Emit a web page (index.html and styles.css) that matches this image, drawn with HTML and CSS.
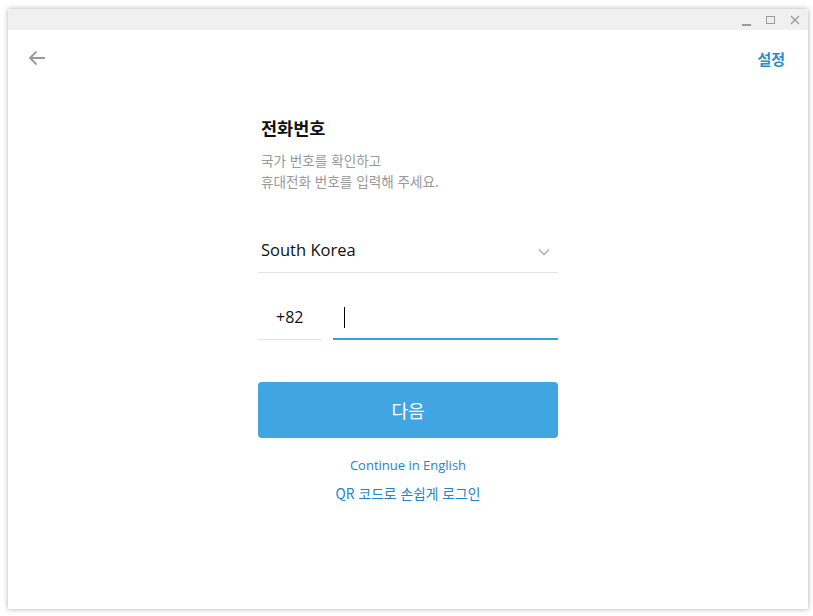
FILE: index.html
```html
<!DOCTYPE html>
<html lang="ko">
<head>
<meta charset="utf-8">
<link rel="stylesheet" href="styles.css">
</head>
<body>
<div class="window">
  <div class="titlebar">
    <span class="ctl ctl-min"></span>
    <span class="ctl ctl-max"></span>
    <svg class="ctl-close" width="10" height="10" viewBox="0 0 10 10"><path d="M1 1L9 9M9 1L1 9" stroke="#9a9a9a" stroke-width="1.3" fill="none"/></svg>
  </div>
  <div class="header">
    <svg class="back" width="18" height="16" viewBox="0 0 18 16"><path d="M17 8H2M8.5 1.5L2 8l6.5 6.5" stroke="#999" stroke-width="1.8" fill="none"/></svg>
    <span class="settings">설정</span>
  </div>
  <div class="form">
    <h1 class="title">전화번호</h1>
    <p class="desc">국가 번호를 확인하고<br>휴대전화 번호를 입력해 주세요.</p>
    <div class="country">
      <span>South Korea</span>
      <svg width="12" height="8" viewBox="0 0 12 8"><path d="M1 1.5l5 5 5-5" stroke="#aaa" stroke-width="1.5" fill="none"/></svg>
    </div>
    <div class="phone">
      <div class="code">+82</div>
      <div class="number"><span class="caret"></span></div>
    </div>
    <button class="next">다음</button>
    <a class="link link-en">Continue in English</a>
    <a class="link link-qr">QR 코드로 손쉽게 로그인</a>
  </div>
</div>
</body>
</html>
```
FILE: styles.css
```css
html, body { margin: 0; padding: 0; background: #fff; }
body {
  width: 813px; height: 616px; overflow: hidden;
  font-family: "Open Sans", "Noto Sans CJK KR", sans-serif;
}
.window {
  margin: 9px 0 0 8px;
  width: 800px; height: 600px;
  background: #fff;
  box-shadow: 0 0 5px rgba(0,0,0,0.32);
  display: flex; flex-direction: column;
}
.titlebar {
  height: 21px; background: #f0f0f0;
  display: flex; align-items: center; justify-content: flex-end;
  padding-right: 8px; gap: 0;
}
.ctl-min { width: 9px; height: 2px; background: #9a9a9a; margin-top: 10px; margin-right: 15px; }
.ctl-max { width: 7px; height: 6px; border: 1.5px solid #9a9a9a; margin-right: 15px; }
.ctl-close { display: block; }
.header {
  display: flex; justify-content: space-between; align-items: center;
  padding: 18px 23px 0 20px; height: 20px;
}
.back { display: block; }
.settings {
  font-family: "Noto Sans CJK KR", sans-serif;
  font-size: 15px; font-weight: 700; color: #2d8bc7;
}
.form {
  width: 300px; margin: 48px auto 0; display: flex; flex-direction: column;
}
.title {
  margin: 0 0 0 3px;
  font-family: "Noto Sans CJK KR", sans-serif;
  font-size: 17.5px; font-weight: 700; color: #111; line-height: 24px;
}
.desc {
  margin: 10px 0 0 3px;
  font-family: "Noto Sans CJK KR", sans-serif;
  font-size: 13.6px; color: #999; line-height: 21px;
}
.country {
  margin-top: 41px;
  height: 40px; border-bottom: 1px solid #e2e2e2;
  display: flex; justify-content: space-between; align-items: center;
  padding: 0 8px 0 3px; box-sizing: border-box;
  font-size: 16.5px; color: #111;
}
.country span { margin-top: -6px; }
.country svg { margin-top: -2px; }
.phone { display: flex; gap: 11px; margin-top: 26px; }
.code {
  width: 64px; height: 41px; box-sizing: border-box;
  border-bottom: 1px solid #e2e2e2;
  font-size: 16px; color: #111; padding: 7px 0 0 18px;
}
.number {
  flex: 1; height: 41px; box-sizing: border-box;
  border-bottom: 2px solid #3d9fd9; padding: 8px 0 0 11px;
}
.caret { display: block; width: 1px; height: 21px; background: #000; }
.next {
  margin-top: 42px; height: 56px; border: 0; border-radius: 4px;
  background: #40a6e2; color: #fff;
  font-family: "Noto Sans CJK KR", sans-serif; font-size: 18px;
}
.link {
  text-align: center; color: #1e86c4; font-size: 13px; line-height: 20px;
}
.link-en { margin-top: 17px; }
.link-qr { margin-top: 8px; font-family: "Noto Sans CJK KR", sans-serif; font-size: 13.8px; }
```
